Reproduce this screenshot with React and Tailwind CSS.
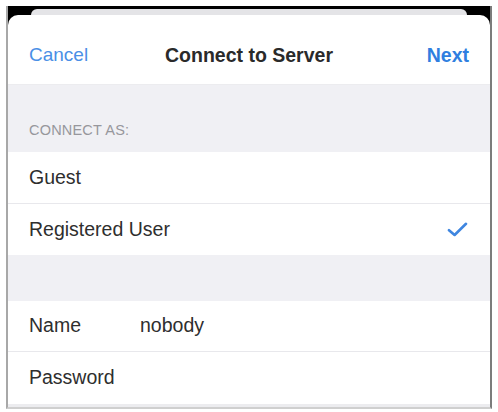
export default function App() {
  const font = { fontFamily: '"Liberation Sans", Arial, sans-serif' };
  return (
    <div className="w-[498px] h-[412px] bg-white pt-[6px] px-[6px]" style={font}>
      {/* device frame */}
      <div className="h-[403px] bg-black border-l-2 border-r-2 border-b-2 border-l-[#a8a8a8] border-r-[#7c7c7c] border-b-[#cfcfcf] flex flex-col overflow-hidden">
        {/* card stacked behind the sheet */}
        <div className="h-[9px] pt-[3px] px-[23px] shrink-0">
          <div className="h-[6px] rounded-t-[9px] bg-[#e4e4e7]" />
        </div>

        {/* sheet */}
        <div className="flex-1 bg-white rounded-t-[10px] flex flex-col overflow-hidden">
          {/* nav bar */}
          <div className="h-[70px] shrink-0 pt-[12px] px-[21px] flex items-center justify-between relative border-b border-[#ececef]">
            <span className="text-[19px] text-[#4a8fe6]">Cancel</span>
            <span className="absolute left-0 right-0 top-[12px] bottom-0 flex items-center justify-center text-[19.5px] font-bold text-[#2a2a2a] pointer-events-none">
              Connect to Server
            </span>
            <span className="text-[19.5px] font-bold text-[#2f7fe0]">Next</span>
          </div>

          {/* section header */}
          <div className="h-[67px] shrink-0 bg-[#f0f0f4] px-[21px] pb-[10px] flex items-end">
            <span className="text-[14.5px] text-[#97979c] tracking-[0.2px]">CONNECT AS:</span>
          </div>

          {/* options */}
          <div className="h-[52px] shrink-0 px-[21px] flex items-center border-b border-[#e8e8ec]">
            <span className="text-[19.5px] text-[#2e2e2e]">Guest</span>
          </div>
          <div className="h-[51px] shrink-0 pl-[21px] pr-[22px] flex items-center justify-between">
            <span className="text-[19.5px] text-[#2e2e2e]">Registered User</span>
            <svg width="21" height="15" viewBox="0 0 21 15" fill="none">
              <path d="M2 8.2 L7.6 13 L19 1.8" stroke="#3f86e0" strokeWidth="2.6" strokeLinecap="round" strokeLinejoin="round" />
            </svg>
          </div>

          {/* spacer */}
          <div className="h-[46px] shrink-0 bg-[#f0f0f4]" />

          {/* credentials */}
          <div className="h-[51px] shrink-0 px-[21px] flex items-center border-b border-[#e8e8ec]">
            <span className="w-[111px] text-[19.5px] text-[#2e2e2e]">Name</span>
            <span className="text-[19.5px] text-[#2e2e2e]">nobody</span>
          </div>
          <div className="h-[52px] shrink-0 px-[21px] flex items-center">
            <span className="text-[19.5px] text-[#2e2e2e]">Password</span>
          </div>
          <div className="flex-1 bg-[#ececef]" />
        </div>
      </div>
    </div>
  );
}
